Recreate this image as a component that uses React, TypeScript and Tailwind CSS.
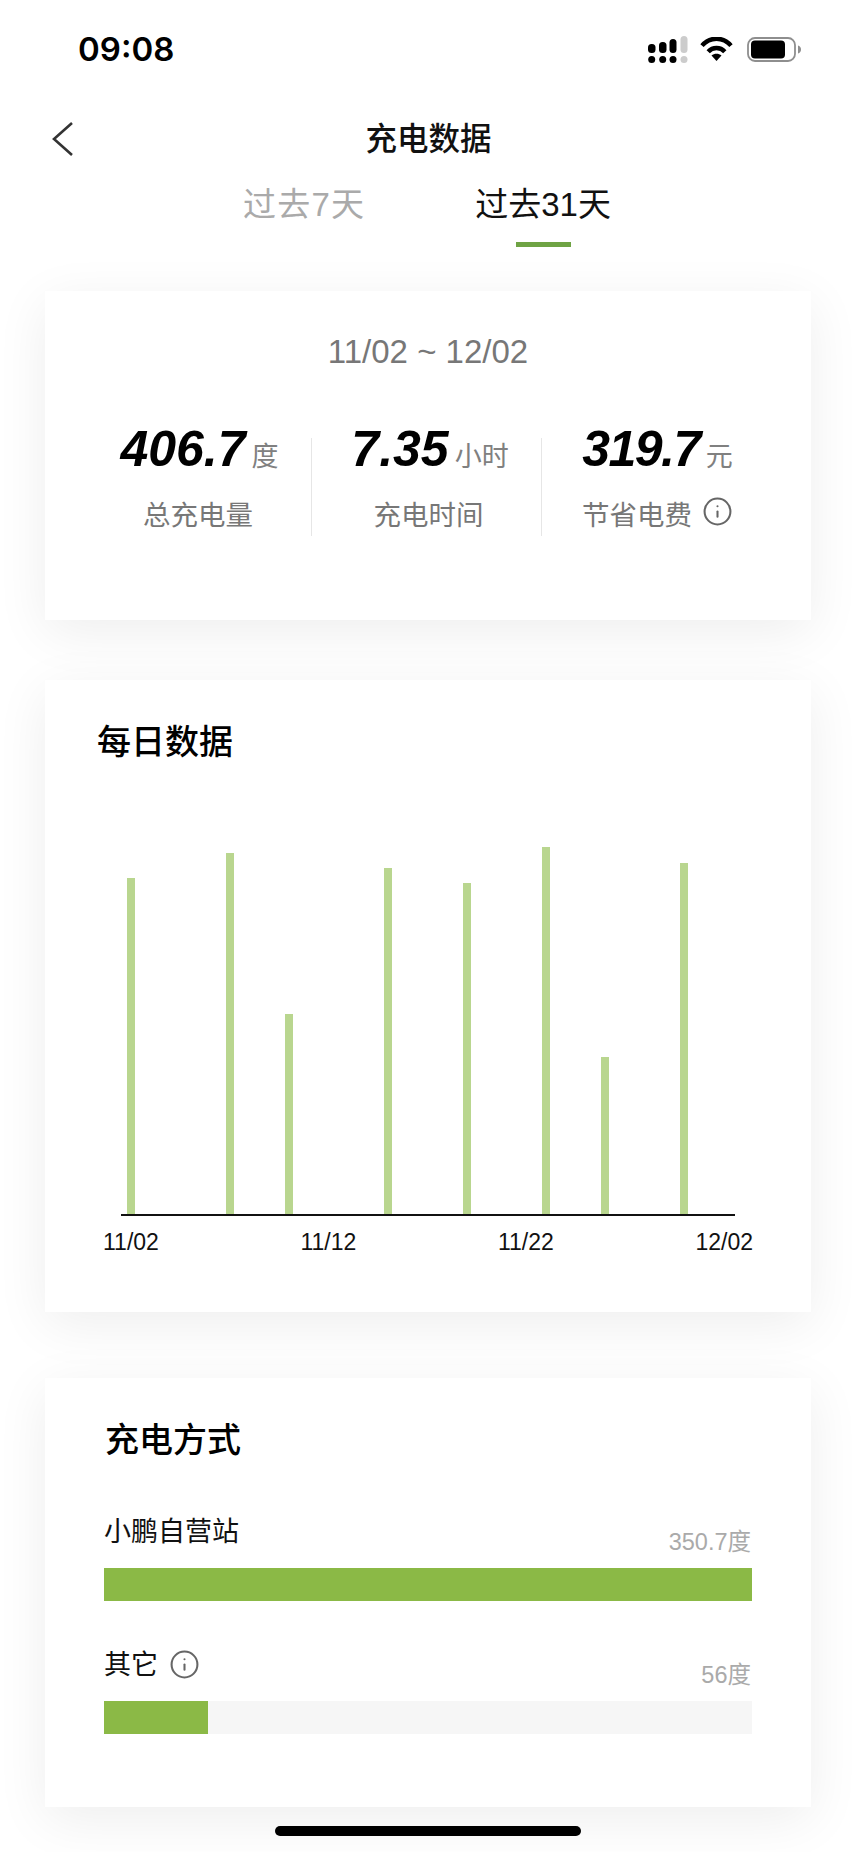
import React from "react";
import { Info } from "lucide-react";

// daily charge bars: x offset inside the chart and top of the bar (chart is 370 tall)
const bars = [
  { x: 6, top: 32 },
  { x: 105, top: 7 },
  { x: 164, top: 168 },
  { x: 263, top: 22 },
  { x: 342, top: 37 },
  { x: 421, top: 1 },
  { x: 480, top: 211 },
  { x: 559, top: 17 },
];

const axisLabels = ["11/02", "11/12", "11/22", "12/02"];

function StatusIcons() {
  return (
    <div className="flex items-center">
      <svg width="40" height="27" viewBox="0 0 40 27">
        <rect x="0" y="8" width="7.500" height="9" rx="3.500" fill="#000" />
        <rect x="11" y="6" width="7.500" height="11" rx="3.500" fill="#000" />
        <rect x="21.500" y="3" width="7" height="14" rx="3.500" fill="#000" />
        <rect x="32.500" y="0" width="7" height="17" rx="3.500" fill="#ccc" />
        <circle cx="3.700" cy="23.500" r="3.500" fill="#000" />
        <circle cx="14.700" cy="23.500" r="3.500" fill="#000" />
        <circle cx="25" cy="23.500" r="3.500" fill="#000" />
        <circle cx="36" cy="23.500" r="3.500" fill="#ccc" />
      </svg>
      <svg className="ml-[12px]" width="33" height="24" viewBox="0 0 33 24">
        <path d="M16.500 24l-5-5.400c2.800-2.600 7.200-2.600 10 0z" fill="#000" />
        <path d="M2 8.600C10-.6 23-.6 31 8.600" fill="none" stroke="#000" strokeWidth="4.400" />
        <path d="M8.200 14.800c4.500-5 12.100-5 16.600 0" fill="none" stroke="#000" strokeWidth="4.400" />
      </svg>
      <svg className="ml-[14px]" width="54" height="25" viewBox="0 0 54 25">
        <rect x="1" y="1" width="47" height="23" rx="7" fill="none" stroke="#8e8e8e" strokeWidth="1.800" />
        <rect x="4" y="3.500" width="34" height="18" rx="4" fill="#000" />
        <path d="M51 8.500c1.800.5 3 2 3 4s-1.200 3.500-3 4z" fill="#8e8e8e" />
      </svg>
    </div>
  );
}

function Chart() {
  return (
    <svg className="ml-[76px] block" width="614" height="370" viewBox="0 0 614 370">
      {bars.map((b) => (
        <rect key={b.x} x={b.x} y={b.top} width="8" height={368 - b.top} fill="#b9d68f" />
      ))}
      <rect x="0" y="368" width="614" height="2" fill="#111" />
    </svg>
  );
}

function Stat({
  value,
  unit,
  label,
  info,
  divider,
  tight,
}: {
  value: string;
  unit: string;
  label: string;
  info?: boolean;
  divider?: boolean;
  tight?: boolean;
}) {
  return (
    <div className={`w-[230px] h-[98px] flex flex-col items-center ${divider ? "border-l border-[#e6e6e6]" : ""}`}>
      <div className={`-mt-[14px] flex items-baseline h-[50px] ${tight ? "ml-[2px]" : "ml-[7px]"}`}>
        <span className={`text-[50px] leading-[50px] font-bold italic text-black ${tight ? "tracking-[-1.5px]" : ""}`}>
          {value}
        </span>
        <span className="ml-[6px] text-[27px] leading-[50px] text-[#808080]">{unit}</span>
      </div>
      <div
        className={`mt-[24px] flex items-center h-[36px] text-[27.500px] leading-[36px] text-[#777] ${
          tight ? "ml-[2px]" : "ml-[4px]"
        }`}
      >
        <span>{label}</span>
        {info && <Info className="ml-[10px] -mt-[9px]" size={31} strokeWidth={1.6} color="#666" />}
      </div>
    </div>
  );
}

function MethodRow({
  name,
  amount,
  percent,
  info,
  className,
}: {
  name: string;
  amount: string;
  percent: number;
  info?: boolean;
  className: string;
}) {
  return (
    <div className={className}>
      <div className="flex justify-between h-[54px]">
        <div className="flex items-start text-[27px] leading-[36px] text-[#111]">
          <span>{name}</span>
          {info && <Info className="ml-[11px] mt-[2px]" size={31} strokeWidth={1.6} color="#666" />}
        </div>
        <span className="mt-[13px] mr-[1px] text-[23.500px] leading-[30px] text-[#aaa]">{amount}</span>
      </div>
      <div className="h-[33px] bg-[#f6f6f6]">
        <div className="h-full bg-[#8bb946]" style={{ width: `${percent}%` }} />
      </div>
    </div>
  );
}

export default function App() {
  return (
    <div className="relative w-[856px] h-[1852px] overflow-hidden bg-white font-['Liberation_Sans','Noto_Sans_CJK_SC',sans-serif]">
      {/* Status bar */}
      <div className="h-[98px] flex items-center justify-between pl-[78px] pr-[55px]">
        <span className="font-['Inter',sans-serif] text-[33px] leading-none font-semibold text-black">09:08</span>
        <StatusIcons />
      </div>

      {/* Nav */}
      <div className="h-[82px] grid grid-cols-[1fr_auto_1fr] items-center">
        <svg className="ml-[50px]" width="24" height="36" viewBox="0 0 24 36">
          <path d="M22 2L4 18l18 16" fill="none" stroke="#333" strokeWidth="2.600" />
        </svg>
        <span className="text-[31.500px] leading-[40px] font-medium text-[#111] ml-[1px]">充电数据</span>
        <span />
      </div>

      {/* Tabs */}
      <div className="flex justify-center gap-[110px] pr-[2px]">
        <div className="flex flex-col items-center">
          <span className="text-[33px] leading-[50px] tracking-[1.2px] text-[#aaa]">过去7天</span>
        </div>
        <div className="flex flex-col items-center">
          <span className="text-[33px] leading-[50px] text-[#111]">过去31天</span>
          <div className="mt-[12px] w-[55px] h-[5px] bg-[#6fa344]" />
        </div>
      </div>

      {/* Summary card */}
      <div className="mt-[44px] mx-[45px] w-[766px] h-[329px] bg-white shadow-[0_12px_50px_rgba(0,0,0,0.07)] pt-[41px]">
        <div className="text-center text-[33px] leading-[40px] text-[#777]">11/02 ~ 12/02</div>
        <div className="mt-[66px] pl-[36px] flex">
          <Stat value="406.7" unit="度" label="总充电量" />
          <Stat value="7.35" unit="小时" label="充电时间" divider />
          <Stat value="319.7" unit="元" label="节省电费" info divider tight />
        </div>
      </div>

      {/* Daily data card */}
      <div className="mt-[60px] mx-[45px] w-[766px] h-[632px] bg-white shadow-[0_12px_50px_rgba(0,0,0,0.07)] pt-[40px]">
        <div className="pl-[52px] text-[34px] leading-[44px] font-medium text-black">每日数据</div>
        <div className="mt-[82px]">
          <Chart />
        </div>
        <div className="mt-[11px] ml-[58px] w-[650px] flex justify-between text-[23px] leading-[30px] text-[#111]">
          {axisLabels.map((l) => (
            <span key={l}>{l}</span>
          ))}
        </div>
      </div>

      {/* Charging method card */}
      <div className="mt-[66px] mx-[45px] w-[766px] h-[429px] bg-white shadow-[0_12px_50px_rgba(0,0,0,0.07)] pt-[40px] px-[59px]">
        <div className="pl-[1px] text-[34px] leading-[44px] font-medium text-black">充电方式</div>
        <MethodRow className="mt-[52px]" name="小鹏自营站" amount="350.7度" percent={100} />
        <MethodRow className="mt-[46px]" name="其它" amount="56度" percent={16} info />
      </div>

      {/* Home indicator */}
      <div className="absolute left-[275px] top-[1826px] w-[306px] h-[10px] rounded-full bg-black" />
    </div>
  );
}
